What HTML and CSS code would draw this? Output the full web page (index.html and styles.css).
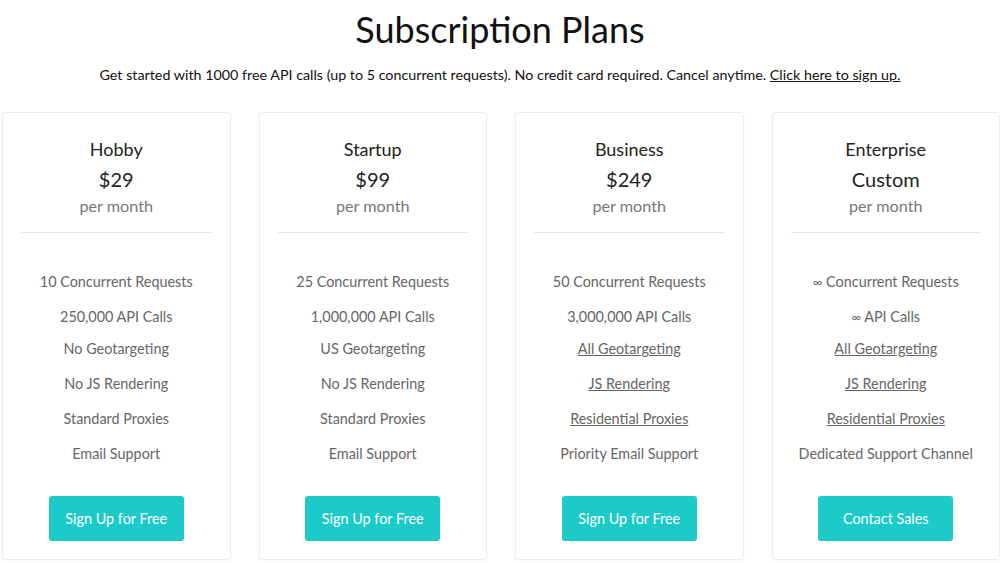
FILE: index.html
```html
<!DOCTYPE html>
<html>
<head>
<meta charset="utf-8">
<link rel="stylesheet" href="styles.css">
</head>
<body>
<div class="page">
  <h1 class="title">Subscription Plans</h1>
  <p class="lead">Get started with 1000 free API calls (up to 5 concurrent requests). No credit card required. Cancel anytime. <a href="#" class="lead-link">Click here to sign up.</a></p>
  <div class="plans">
    <div class="card">
      <div class="head">
        <div class="name">Hobby</div>
        <div class="price">$29</div>
        <div class="period">per month</div>
      </div>
      <ul class="features">
        <li class="f f1">10 Concurrent Requests</li>
        <li class="f f2">250,000 API Calls</li>
        <li class="f f3">No Geotargeting</li>
        <li class="f">No JS Rendering</li>
        <li class="f">Standard Proxies</li>
        <li class="f">Email Support</li>
      </ul>
      <a href="#" class="btn">Sign Up for Free</a>
    </div>
    <div class="card">
      <div class="head">
        <div class="name">Startup</div>
        <div class="price">$99</div>
        <div class="period">per month</div>
      </div>
      <ul class="features">
        <li class="f f1">25 Concurrent Requests</li>
        <li class="f f2">1,000,000 API Calls</li>
        <li class="f f3">US Geotargeting</li>
        <li class="f">No JS Rendering</li>
        <li class="f">Standard Proxies</li>
        <li class="f">Email Support</li>
      </ul>
      <a href="#" class="btn">Sign Up for Free</a>
    </div>
    <div class="card">
      <div class="head">
        <div class="name">Business</div>
        <div class="price">$249</div>
        <div class="period">per month</div>
      </div>
      <ul class="features">
        <li class="f f1">50 Concurrent Requests</li>
        <li class="f f2">3,000,000 API Calls</li>
        <li class="f f3"><span class="u">All Geotargeting</span></li>
        <li class="f"><span class="u">JS Rendering</span></li>
        <li class="f"><span class="u">Residential Proxies</span></li>
        <li class="f">Priority Email Support</li>
      </ul>
      <a href="#" class="btn">Sign Up for Free</a>
    </div>
    <div class="card">
      <div class="head">
        <div class="name">Enterprise</div>
        <div class="price">Custom</div>
        <div class="period">per month</div>
      </div>
      <ul class="features">
        <li class="f f1"><span class="inf">∞</span> Concurrent Requests</li>
        <li class="f f2"><span class="inf">∞</span> API Calls</li>
        <li class="f f3"><span class="u">All Geotargeting</span></li>
        <li class="f"><span class="u">JS Rendering</span></li>
        <li class="f"><span class="u">Residential Proxies</span></li>
        <li class="f">Dedicated Support Channel</li>
      </ul>
      <a href="#" class="btn">Contact Sales</a>
    </div>
  </div>
</div>
</body>
</html>
```
FILE: styles.css
```css
* { box-sizing: border-box; }
html, body { margin: 0; padding: 0; background: #fff; overflow: hidden; }
body { font-family: Lato, "Open Sans", sans-serif; width: 1000px; height: 563px; }
.page { display: flex; flex-direction: column; align-items: center; }
.title {
  margin: 6px 0 0;
  font-size: 36px;
  font-weight: 400;
  line-height: 46px;
  color: #111;
}
.lead {
  margin: 13px 0 0;
  font-size: 14.3px;
  line-height: 20px;
  color: #111;
}
.lead-link { color: #111; text-decoration: underline; }
.plans {
  align-self: flex-start;
  margin: 27px 0 0 2px;
  display: flex;
  gap: 28px;
  width: 998px;
}
.card {
  flex: 1 1 0;
  height: 448px;
  border: 1px solid #ececec;
  border-radius: 3px;
  box-shadow: 0 1px 3px rgba(0,0,0,0.04);
  padding: 0 18px;
  display: flex;
  flex-direction: column;
  align-items: center;
  text-align: center;
}
.head {
  width: 100%;
  padding: 23px 0 16px;
  border-bottom: 1px solid #e6e6e6;
}
.name { font-size: 18px; line-height: 26px; color: #222; }
.price { font-size: 20px; line-height: 34px; color: #222; }
.period { font-size: 16.2px; line-height: 20px; color: #777; }
.features {
  list-style: none;
  margin: 0;
  padding: 0;
  width: 100%;
  color: #666;
  font-size: 14.4px;
}
.f { line-height: 20px; margin-top: 15px; }
.f1 { margin-top: 39px; }
.f3 { margin-top: 12px; }
.u { text-decoration: underline; }
.inf { font-size: 13px; }
.btn {
  margin-top: 32px;
  display: inline-flex;
  align-items: center;
  justify-content: center;
  width: 135px;
  height: 45px;
  border-radius: 3px;
  background: #1ccac7;
  color: #fff;
  font-size: 14.4px;
  text-decoration: none;
}
```
